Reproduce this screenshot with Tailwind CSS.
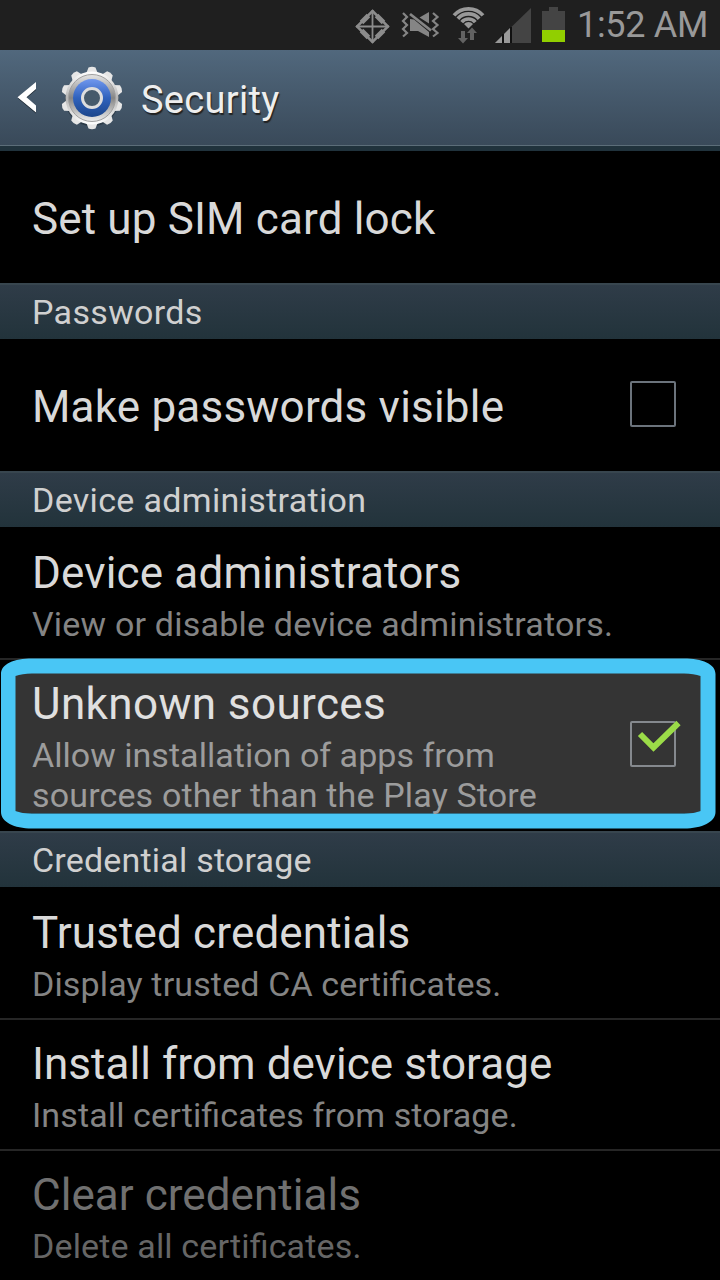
<!DOCTYPE html>
<html lang="en">
<head>
<meta charset="utf-8">
<title>Security</title>
<script src="https://cdn.jsdelivr.net/npm/@tailwindcss/browser@4"></script>
</head>
<body class="bg-black">
<div class="relative flex h-[1280px] w-[720px] flex-col overflow-hidden bg-black font-['Roboto',sans-serif] whitespace-nowrap text-[#d9d9d9] [font-feature-settings:'liga']">
  <div class="flex h-[50px] shrink-0 bg-[#1f1f1f]">
    <svg class="ml-[340px] h-[50px] w-[228px] shrink-0" viewBox="340 0 228 50">
      <g fill="none" stroke="#8c8c8c">
        <path d="M372.500 11L388 26.500L372.500 42L357 26.500Z" stroke-width="2.500"/>
        <path d="M372.500 10V43M356 26.500H389" stroke-width="1.800"/>
        <path d="M361.500 22.500L368.500 15.500M376.500 15.500L383.500 22.500M383.500 30.500L376.500 37.500M368.500 37.500L361.500 30.500" stroke-width="5"/>
      </g>
      <g fill="none" stroke="#858585" stroke-width="2.200">
        <path d="M403 13L407 17L403 21L407 25L403 29L407 33L403 36.500"/>
        <path d="M433 13L437.500 17L433 21L437.500 25L433 29L437.500 33L433 36.500"/>
      </g>
      <path fill="#858585" d="M410 19L414 19.500L429 32V37L418 31H410ZM429 12V23.500L419.500 17.500Z"/>
      <path d="M410 14L431 30.500" stroke="#858585" stroke-width="2.800"/>
      <g fill="none" stroke="#999" stroke-width="3.700">
        <path d="M454 15.400A19.200 19.200 0 0 1 483 15.400M457.900 18.800A14 14 0 0 1 479.100 18.800M461.700 22.100A9 9 0 0 1 475.300 22.100"/>
      </g>
      <path fill="#999" d="M464 24.100A6 6 0 0 1 473 24.100L468.500 28.500Z"/>
      <path fill="#626262" d="M461 31H465V38H468L463 43.500L458 38H461ZM470 40V33H467L472 27.500L477 33H474V40Z"/>
      <path fill="#444" d="M531 8V43H495Z"/>
      <path fill="#999" d="M511 27V43H495Z"/>
      <path stroke="#111" stroke-width="2" d="M503 34V43M511 27V43"/>
      <path fill="#444" d="M542 11H549V7H558V11H565V30H542Z"/>
      <path fill="#91cf00" d="M542 30H565V42H542Z"/>
    </svg>
    <span class="ml-[9px] text-[36px] leading-[50px] tracking-[-0.3px] text-[#999]">1:52 AM</span>
  </div>

  <header class="flex h-[101px] shrink-0 border-b-[5px] border-[#20323c] bg-linear-to-b from-[#51687d] to-[#394959]">
    <div class="flex w-full border-b border-[#5c6d79]">
      <svg class="h-[95px] w-[140px] shrink-0" viewBox="0 50 140 95">
        <defs>
          <linearGradient id="metal" x1="0" y1="0" x2="0" y2="1"><stop stop-color="#fff"/><stop offset=".5" stop-color="#b5b5b5"/><stop offset="1" stop-color="#fff"/></linearGradient>
          <linearGradient id="ring" x1="0" y1="0" x2="0" y2="1"><stop stop-color="#e6e6e6"/><stop offset=".5" stop-color="#858585"/><stop offset="1" stop-color="#eee"/></linearGradient>
          <linearGradient id="blue" x1="0" y1="0" x2="0" y2="1"><stop stop-color="#7097ee"/><stop offset=".5" stop-color="#2f62bd"/><stop offset="1" stop-color="#1c468b"/></linearGradient>
          <path id="tooth" d="M86 74L88.500 67.500Q92 66 95.500 67.500L98 74Z"/>
        </defs>
        <path d="M36 83.500L18 98.500L36 113.500V107L26 98.500L36 90Z" fill="#1c2731"/>
        <path d="M36 82L17.500 97.300L36 112.500V105.500L26.500 97.300L36 89Z" fill="#fff"/>
        <g fill="#17232d" opacity=".5" transform="translate(0 1.200)"><circle cx="92" cy="98" r="27"/></g>
        <g fill="#e6e6e6">
          <use href="#tooth"/><use href="#tooth" transform="rotate(36 92 98)"/><use href="#tooth" transform="rotate(72 92 98)"/><use href="#tooth" transform="rotate(108 92 98)"/><use href="#tooth" transform="rotate(144 92 98)"/><use href="#tooth" transform="rotate(180 92 98)"/><use href="#tooth" transform="rotate(216 92 98)"/><use href="#tooth" transform="rotate(252 92 98)"/><use href="#tooth" transform="rotate(288 92 98)"/><use href="#tooth" transform="rotate(324 92 98)"/>
        </g>
        <circle cx="92" cy="98" r="26.500" fill="url(#metal)"/>
        <circle cx="92" cy="98" r="23.500" fill="url(#ring)" stroke="#a0a0a0" stroke-width="1"/>
        <circle cx="92" cy="98" r="19" fill="url(#blue)"/>
        <circle cx="92" cy="98" r="9.500" fill="#465a6b" stroke="#ddd" stroke-width="3"/>
      </svg>
      <h1 class="pl-px text-[38px] leading-[100px] tracking-[0.3px] text-[#eee] [text-shadow:1px_2px_1px_#222]">Security</h1>
    </div>
  </header>

  <main class="flex flex-col">
    <div class="h-[132px] pt-[42px] pl-8 text-[44px] leading-[52px] tracking-[0.15px]">Set up SIM card lock</div>
    <h2 class="h-14 border-t-2 border-[#38464f] bg-linear-to-b from-[#2f3c48] to-[#22333b] pt-[7px] pl-8 text-[34px] leading-[40px] tracking-[0.33px] text-[#d0d0d0]">Passwords</h2>
    <div class="flex h-[132px] justify-between pt-[42px] pr-11 pl-8">
      <span class="text-[44px] leading-[52px] tracking-[0.2px]">Make passwords visible</span>
      <span class="size-[46px] rounded-[2px] border-2 border-[#6b737c]"></span>
    </div>
    <h2 class="h-14 border-t-2 border-[#38464f] bg-linear-to-b from-[#2f3c48] to-[#22333b] pt-[7px] pl-8 text-[34px] leading-[40px] tracking-[0.33px] text-[#d0d0d0]">Device administration</h2>
    <div class="flex h-[133px] flex-col gap-[5px] border-b-2 border-[#262626] pt-5 pl-8">
      <span class="text-[44px] leading-[52px] tracking-[0.16px]">Device administrators</span>
      <span class="text-[34px] leading-[40px] tracking-[0.2px] text-[#848484]">View or disable device administrators.</span>
    </div>
    <div class="relative flex h-[171px] justify-between pr-11 pl-8">
      <svg class="absolute top-[-2px] left-0 h-[172px] w-[720px]" viewBox="0 658 720 172">
        <path d="M15 675Q22 673 32 673H684Q694 673 701 675V811Q694 813.500 684 813.500H32Q22 813.500 15 811Z" fill="#343434"/>
        <path fill-rule="evenodd" fill="#49c6f5" d="M32 658.500H684C702 658.500 715.500 664 715.500 674V812C715.500 822 702 828.500 684 828.500H32C14 828.500 1 822 1 812V674C1 664 14 658.500 32 658.500ZM15.500 676V811Q22 813.500 32 813.500H684Q694 813.500 700.500 811V676Q694 673.500 684 673.500H32Q22 673.500 15.500 676Z"/>
      </svg>
      <div class="relative flex flex-col gap-[5px] pt-[18px]">
        <span class="text-[44px] leading-[52px] tracking-[0.38px] text-[#e0e0e0]">Unknown sources</span>
        <span class="text-[34px] leading-[40px] text-[#9c9c9c]"><span class="tracking-[0.03px]">Allow installation of apps from</span><br><span class="tracking-[0.15px]">sources other than the Play Store</span></span>
      </div>
      <span class="relative mt-[61px] size-[46px] rounded-[2px] border-2 border-[#85898e]">
        <svg class="absolute -top-[3px] left-[4px] h-[36px] w-[46px]" viewBox="636 720 46 36"><path d="M640 734L653.500 747.500L678.500 723" fill="none" stroke="#9bdc48" stroke-width="6"/></svg>
      </span>
    </div>
    <h2 class="h-14 border-t-2 border-[#38464f] bg-linear-to-b from-[#2f3c48] to-[#22333b] pt-[7px] pl-8 text-[34px] leading-[40px] tracking-[0.2px] text-[#d0d0d0]">Credential storage</h2>
    <div class="flex h-[133px] flex-col gap-[5px] border-b-2 border-[#262626] pt-5 pl-8">
      <span class="text-[44px] leading-[52px] tracking-[0.14px]">Trusted credentials</span>
      <span class="text-[34px] leading-[40px] tracking-[0.14px] text-[#848484]">Display trusted CA certificates.</span>
    </div>
    <div class="flex h-[131px] flex-col gap-[5px] border-b-2 border-[#262626] pt-[18px] pl-8">
      <span class="text-[44px] leading-[52px] tracking-[0.05px]">Install from device storage</span>
      <span class="text-[34px] leading-[40px] tracking-[0.12px] text-[#848484]">Install certificates from storage.</span>
    </div>
    <div class="flex h-[129px] flex-col gap-[5px] pt-[18px] pl-8">
      <span class="text-[44px] leading-[52px] tracking-[0.05px] text-[#707070]">Clear credentials</span>
      <span class="text-[34px] leading-[40px] tracking-[0.15px] text-[#666]">Delete all certificates.</span>
    </div>
  </main>
</div>
</body>
</html>
